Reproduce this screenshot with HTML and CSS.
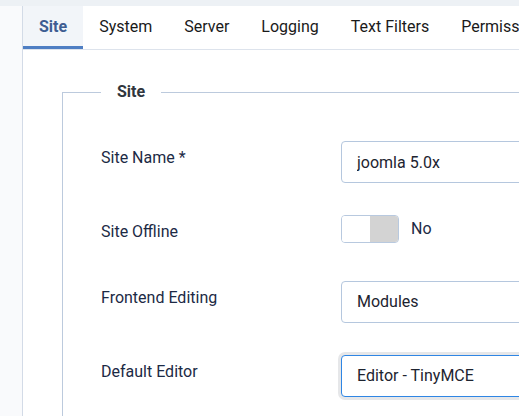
FILE: index.html
```html
<!DOCTYPE html>
<html lang="en">
<head>
<meta charset="utf-8">
<title>Global Configuration</title>
<link rel="stylesheet" href="styles.css">
</head>
<body>
<div class="page">
  <div class="card">
    <nav class="tabs">
      <div class="tab active">Site</div>
      <div class="tab">System</div>
      <div class="tab">Server</div>
      <div class="tab">Logging</div>
      <div class="tab">Text Filters</div>
      <div class="tab">Permissions</div>
    </nav>
    <div class="card-body">
      <fieldset class="options">
        <legend class="legend">Site</legend>
        <div class="row">
          <label class="label" for="sitename">Site Name *</label>
          <div class="control"><input id="sitename" class="field" type="text" value="joomla 5.0x"></div>
        </div>
        <div class="row">
          <div class="label">Site Offline</div>
          <div class="control switch-wrap">
            <span class="switch"><span class="switch-on"></span><span class="switch-off"></span></span>
            <span class="switch-text">No</span>
          </div>
        </div>
        <div class="row">
          <div class="label">Frontend Editing</div>
          <div class="control"><div class="field">Modules</div></div>
        </div>
        <div class="row">
          <div class="label">Default Editor</div>
          <div class="control"><div class="field focus">Editor - TinyMCE</div></div>
        </div>
      </fieldset>
    </div>
  </div>
</div>
</body>
</html>
```

FILE: styles.css
```css
* { box-sizing: border-box; }
html, body {
  margin: 0;
  padding: 0;
  overflow: hidden;
}
body {
  background: #f9fafc;
  font-family: Roboto, "Liberation Sans", sans-serif;
  font-size: 16px;
  line-height: 24px;
  color: #1c2a45;
  width: 519px;
  height: 416px;
}
.page {
  border-top: 6px solid #edf1f5;
  padding-left: 22px;
  width: 760px;
}
.card {
  background: #fff;
  border-left: 1px solid #d3dbe7;
  min-height: 410px;
}
.tabs {
  display: flex;
  border-bottom: 1px solid #dde3ec;
  height: 44px;
}
.tab {
  flex: none;
  white-space: nowrap;
  padding: 2px 16px 0;
  height: 43px;
  line-height: 38px;
  color: #1a1a1a;
  border-bottom: 3px solid transparent;
}
.tab.active {
  background: #f2f5f9;
  border-bottom-color: #4e7ec3;
  color: #3e5d92;
  font-weight: 700;
}
.card-body {
  padding: 32px 0 0 39px;
}
.options {
  margin: 0;
  border: 1px solid #bccadd;
  border-right: 0;
  border-bottom: 0;
  padding: 39px 0 0 38px;
  min-width: 0;
}
.legend {
  padding: 0 16px;
  margin: 0;
  line-height: 20px;
  font-weight: 700;
  color: #30363d;
}
.row {
  display: grid;
  grid-template-columns: 240px 1fr;
  margin-bottom: 32px;
}
.label {
  padding-top: 5px;
  color: #1c2a45;
}
.control { min-width: 0; }
.field {
  display: block;
  width: 100%;
  height: 42px;
  margin: 0;
  border: 1px solid #b5c7de;
  border-radius: 4px;
  padding: 0 15px;
  font-family: Roboto, "Liberation Sans", sans-serif;
  font-size: 16px;
  line-height: 40px;
  color: #1d2430;
  background: #fff;
  outline: none;
}
.field.focus {
  border-color: #2f86e4;
  box-shadow: 0 0 0 3px #e6e7e9;
}
.switch-wrap {
  display: flex;
  align-items: flex-start;
  height: 34px;
}
.switch {
  display: flex;
  width: 58px;
  height: 28px;
  border: 1px solid #b8c9df;
  border-radius: 4px;
  overflow: hidden;
}
.switch-on {
  flex: 1;
  background: #fff;
}
.switch-off {
  flex: 1;
  background: #d3d3d3;
}
.switch-text {
  margin-left: 12px;
  line-height: 28px;
  color: #1c2a45;
}
```
